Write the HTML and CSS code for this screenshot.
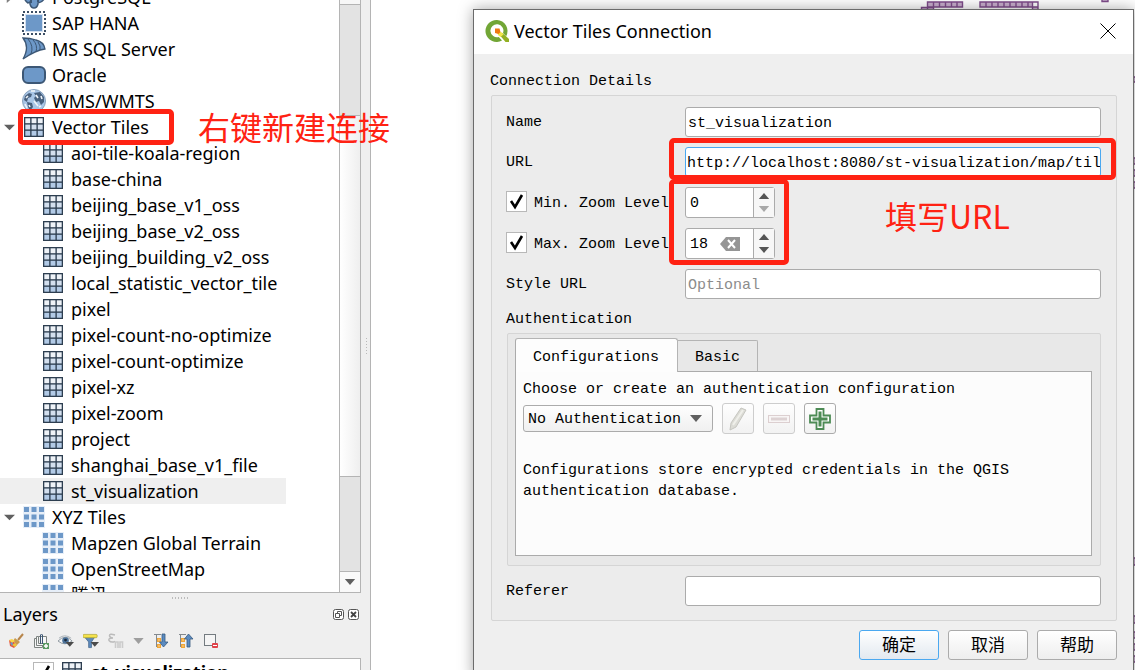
FILE: index.html
```html
<!DOCTYPE html>
<html lang="en">
<head>
<meta charset="utf-8">
<title>Vector Tiles Connection</title>
<link rel="stylesheet" href="styles.css">
</head>
<body>
<svg class="defs" width="0" height="0" aria-hidden="true">
  <defs>
    <symbol id="grid" viewBox="0 0 20 20"><rect width="20" height="20" fill="#2d3e50"/><g fill="#eef2f7"><rect x="1.300" y="1.300" width="4.900" height="4.900"/><rect x="7.550" y="1.300" width="4.900" height="4.900"/><rect x="13.800" y="1.300" width="4.900" height="4.900"/></g><g fill="#d3dfee"><rect x="1.300" y="7.550" width="4.900" height="4.900"/><rect x="7.550" y="7.550" width="4.900" height="4.900"/><rect x="13.800" y="7.550" width="4.900" height="4.900"/></g><g fill="#b2cae6"><rect x="1.300" y="13.800" width="4.900" height="4.900"/><rect x="7.550" y="13.800" width="4.900" height="4.900"/><rect x="13.800" y="13.800" width="4.900" height="4.900"/></g></symbol>
    <symbol id="xyz" viewBox="0 0 22 22"><rect width="22" height="22" fill="#e6eef8"/><path fill="#6d98c8" d="M1 1h5v5H1zM8.500 1h5v5h-5zM16 1h5v5h-5zM1 8.500h5v5H1zM8.500 8.500h5v5h-5zM16 8.500h5v5h-5zM1 16h5v5H1zM8.500 16h5v5h-5zM16 16h5v5h-5z"/></symbol>
    <symbol id="down" viewBox="0 0 12 7"><path d="M0 0h12L6 7z" fill="currentColor"/></symbol>
    <symbol id="up" viewBox="0 0 12 7"><path d="M0 7h12L6 0z" fill="currentColor"/></symbol>
  </defs>
</svg>
<div class="app">
  <aside class="side">
    <section class="browser">
      <ul class="tree">
        <li class="row"><svg class="tw" viewBox="0 0 12 12"><path d="M3 0v12l7-6z" fill="#808080"/></svg><svg class="ic" viewBox="0 0 24 24"><path d="M1 4Q1 1 6 1h13q5 1 4 10-1 6-7 7v1q-1 4-4 4-3 0-4-4v-2l-2 1Q1 15 1 4z" fill="#6d98c8" stroke="#3c5775" stroke-width="1.500"/><path d="M9 18v-5M16 17v-4" stroke="#3c5775" stroke-width="2"/></svg>PostgreSQL</li>
        <li class="row"><svg class="ic" viewBox="0 0 24 24"><rect x="1" y="1" width="22" height="22" fill="none" stroke="#3c4f66" stroke-width="2" stroke-dasharray="2 2"/><rect x="3" y="3" width="18" height="18" fill="#d4e1f1"/><rect x="4" y="4" width="16" height="16" fill="#6d98c8"/></svg>SAP HANA</li>
        <li class="row"><svg class="ic" viewBox="0 0 24 24"><path d="M1 1q7 0 13 2 8 2 9 9-9 1-22 10Q8 10 1 1z" fill="#6d98c8" stroke="#3c5775" stroke-width="1.300"/><path d="M6 2q6 7 3 15M11 3q5 5 3 12M16 5q3 4 2 8" fill="none" stroke="#3c5775"/></svg>MS SQL Server</li>
        <li class="row"><svg class="ic" viewBox="0 0 24 24"><rect x="1" y="4" width="22" height="16" rx="5" fill="#6d98c8" stroke="#3c5775" stroke-width="2"/></svg>Oracle</li>
        <li class="row"><svg class="ic" viewBox="0 0 24 24"><circle cx="12" cy="12" r="11.500" fill="#a8c5e6" stroke="#8ba3bd"/><path d="M3 7l4-3 3 1-1 3-3 1-1 4-3-2zM5 13l5 1 1 4-3 4-2-4zM12 4l6-1 4 5 0 5-3 3-2-4-3 1-2-4 2-2z" fill="#48607d"/><path d="M4 9l2-2M7 16l1 2M14 6l2 3M19 7l1 3M12 12l4 5M3 15l2 4M17 18l2-1M9 2h4" stroke="#eef3f8" stroke-width="1.600"/></svg>WMS/WMTS</li>
        <li class="row"><svg class="tw" viewBox="0 0 12 12"><path d="M0 3h12L6 9z" fill="#606060"/></svg><svg class="ic g"><use href="#grid"/></svg>Vector Tiles<span class="mark mark-tree"></span><span class="note note-tree">右键新建连接</span></li>
        <li class="row child"><svg class="ic g"><use href="#grid"/></svg>aoi-tile-koala-region</li>
        <li class="row child"><svg class="ic g"><use href="#grid"/></svg>base-china</li>
        <li class="row child"><svg class="ic g"><use href="#grid"/></svg>beijing_base_v1_oss</li>
        <li class="row child"><svg class="ic g"><use href="#grid"/></svg>beijing_base_v2_oss</li>
        <li class="row child"><svg class="ic g"><use href="#grid"/></svg>beijing_building_v2_oss</li>
        <li class="row child"><svg class="ic g"><use href="#grid"/></svg>local_statistic_vector_tile</li>
        <li class="row child"><svg class="ic g"><use href="#grid"/></svg>pixel</li>
        <li class="row child"><svg class="ic g"><use href="#grid"/></svg>pixel-count-no-optimize</li>
        <li class="row child"><svg class="ic g"><use href="#grid"/></svg>pixel-count-optimize</li>
        <li class="row child"><svg class="ic g"><use href="#grid"/></svg>pixel-xz</li>
        <li class="row child"><svg class="ic g"><use href="#grid"/></svg>pixel-zoom</li>
        <li class="row child"><svg class="ic g"><use href="#grid"/></svg>project</li>
        <li class="row child"><svg class="ic g"><use href="#grid"/></svg>shanghai_base_v1_file</li>
        <li class="row child selected"><svg class="ic g"><use href="#grid"/></svg>st_visualization</li>
        <li class="row"><svg class="tw" viewBox="0 0 12 12"><path d="M0 3h12L6 9z" fill="#606060"/></svg><svg class="ic x"><use href="#xyz"/></svg>XYZ Tiles</li>
        <li class="row child"><svg class="ic x"><use href="#xyz"/></svg>Mapzen Global Terrain</li>
        <li class="row child"><svg class="ic x"><use href="#xyz"/></svg>OpenStreetMap</li>
        <li class="row child"><svg class="ic x"><use href="#xyz"/></svg>腾讯</li>
      </ul>
      <div class="scroll">
        <div class="sb-up"></div><div class="sb-before"></div><div class="sb-thumb"></div><div class="sb-after"></div>
        <div class="sb-down"><svg width="12" height="6"><use href="#down"/></svg></div>
      </div>
    </section>
    <div class="grip"></div>
    <section class="layers">
      <header class="layers-head">
        <h2 class="layers-title">Layers</h2>
        <button class="tiny" aria-label="Float"><svg viewBox="0 0 11 11"><rect x=".5" y=".5" width="10" height="10" rx="2" fill="#fff" stroke="#555"/><path d="M4.500 5V2.500h4v4H7M2.500 4.500h4v4h-4z" fill="none" stroke="#555"/></svg></button>
        <button class="tiny" aria-label="Close panel"><svg viewBox="0 0 11 11"><rect x=".5" y=".5" width="10" height="10" rx="2" fill="#fff" stroke="#555"/><path d="M3 3l5 5M8 3L3 8" stroke="#444" stroke-width="1.800"/></svg></button>
      </header>
      <div class="tools">
        <button class="tool" aria-label="Style"><svg viewBox="0 0 16 16"><path d="M15 1l-5 6" stroke="#b8864b" stroke-width="2"/><path d="M7 5l5 4-3 3-4-4z" fill="#c99a4e"/><path d="M1 7l4 1 4 4-3 3-4-2z" fill="#e8563c"/><path d="M1 7l3-1 3 2-3 2z" fill="#f8d648"/><path d="M4 12l3-2 2 2-2 2z" fill="#e9c93c"/><path d="M2 10l2-1 1 2-1 2z" fill="#6d98c8"/></svg></button>
        <button class="tool" aria-label="Add group"><svg viewBox="0 0 16 16"><path d="M3.500 5.500h-2v9h8v-2M5.500 3.500h-2v9h8v-2M5.500 3.500h8v7h-8z" fill="#f6f6f6" stroke="#7c8380"/><path d="M7.500 11V2q1-2 2 0v9" fill="none" stroke="#3c5775"/><path d="M10 10h6v6h-6z" fill="#5a9a62"/><path d="M13 11v4M11 13h4" stroke="#fff" stroke-width="1.500"/></svg></button>
        <button class="tool" aria-label="Visibility"><svg viewBox="0 0 17 16"><path d="M0 8q8-8 15 0-8 6-15 0z" fill="#f5f6f7" stroke="#8b959d"/><path d="M1 5q6-5 13 0" fill="none" stroke="#a7afb5"/><circle cx="8" cy="7.500" r="3.500" fill="#4c7299"/><circle cx="8" cy="7" r="1.500" fill="#19293b"/><path d="M8 9h9l-4.500 5z" fill="#4b4b4b"/></svg></button>
        <button class="tool" aria-label="Filter"><svg viewBox="0 0 17 16"><path d="M1 3h12L9 9v6H6V9z" fill="#5d8abc" stroke="#45698f" stroke-width=".8"/><rect y="1" width="15" height="3.500" rx="1" fill="#f4e24c" stroke="#aa9f2e" stroke-width=".7"/><path d="M8 9h9l-4.500 5z" fill="#4b4b4b"/></svg></button>
        <button class="tool" aria-label="Filter by expression"><svg viewBox="0 0 16 16"><path d="M7 2Q1 0 1.500 3 2 5 5 5 0 5 1 7.500 3 10 7 8.500" fill="none" stroke="#bbb" stroke-width="1.400"/><path d="M7.500 15V9H10v6M12 15V9h2.500v6" fill="none" stroke="#cbcbcb" stroke-width="1.600"/></svg></button>
        <svg class="caret" width="11" height="6"><use href="#down"/></svg>
        <button class="tool" aria-label="Expand all"><svg viewBox="0 0 16 16"><path d="M1 1.500h7M3.500 2v12M3 7.500h3M3 13.500h5" fill="none" stroke="#83898e"/><path d="M4 5h4v4H4zM4 11h4v4H4z" fill="#f0a637"/><path d="M5.500 6.500h1v1h-1zM5.500 12.500h1v1h-1z" fill="#fff"/><path d="M9 1h3v8h3l-4.500 5L6.500 9H9z" fill="#5b8bc0" stroke="#395b80" stroke-width=".8"/></svg></button>
        <button class="tool" aria-label="Collapse all"><svg viewBox="0 0 16 16"><path d="M1 1.500h7M2.500 2v12M2 7.500h3M2 13.500h5" fill="none" stroke="#83898e"/><path d="M3 5h4v4H3zM3 11h4v4H3z" fill="#f0a637"/><path d="M4.500 6.500h1v1h-1zM4.500 12.500h1v1h-1z" fill="#fff"/><path d="M9 14h3V6h3L10.500 1 6.500 6H9z" fill="#5b8bc0" stroke="#395b80" stroke-width=".8"/></svg></button>
        <button class="tool" aria-label="Remove layer"><svg viewBox="0 0 16 16"><rect x="1.500" y="1.500" width="11" height="11" fill="#f5f5f5" stroke="#747b80"/><rect x="9" y="10" width="6" height="5" rx="1" fill="#e0424a"/><path d="M10 12.500h4" stroke="#fff"/></svg></button>
      </div>
      <div class="layer-list">
        <label class="layer"><input class="check" type="checkbox" checked><svg class="ic g"><use href="#grid"/></svg>st_visualization</label>
      </div>
    </section>
  </aside>
  <div class="splitter"></div>
  <main class="map">
    <svg class="features" width="220" height="670" viewBox="0 0 220 670" aria-hidden="true">
      <g fill="#c9afce" stroke="#7f4c8b" stroke-width="1.400">
        <path d="M12.500 2h35v5h-35zM18.500 2v5M24.500 2v5M30.500 2v5M36.500 2v5M42 2v5M6.500 7.500h12V12h-12zM12.500 7v4"/>
        <path d="M65 2h58v5H65zM71 2v5M77 2v5M83 2v5M89 2v5M95 2v5M101 2v5M107 2v5M113 2v5M117.500 2v9h5.500V2"/>
        <path d="M187-3h6v4.500h-6z"/>
        <path d="M218 77h6v5h-6zM218 158h6v6h-6v6h6v6h-6v6h6v6h-6zM218 558h6v7h-6zM218 616h6v7h-6zM218 632h6v6h-6v6h6v6h-6v6h6v6h-6z"/>
      </g>
    </svg>
    <div class="dialog" role="dialog" aria-labelledby="dlg-title">
      <header class="titlebar">
        <svg class="logo" viewBox="0 0 24 24"><path d="M12 1a11 11 0 1 0 5 20.500l-3.200-3.600A6.500 6.500 0 1 1 18 14l3.200 3.200A11 11 0 0 0 12 1z" fill="#72a636"/><path d="M13 14h4.500L24 20v3h-3.500z" fill="#93b023"/><path d="M12 12l5 1.500 1.500 2-3 2.500-2.500-2z" fill="#f0e64a"/><path d="M10 9.500h4.500l1 3.500-2 2-3.500-1z" fill="#ee7913"/></svg>
        <h1 class="title" id="dlg-title">Vector Tiles Connection</h1>
        <button class="close" aria-label="Close"><svg viewBox="0 0 16 16"><path d="M.5.5l15 15M15.500.5l-15 15" stroke="#000"/></svg></button>
      </header>
      <form class="body">
        <h2 class="heading">Connection Details</h2>
        <div class="group">
          <div class="field"><label for="name">Name</label><input class="text" id="name" value="st_visualization"></div>
          <div class="field"><label for="url">URL</label><div class="url-wrap"><input class="text focus" id="url" value="http://localhost:8080/st-visualization/map/tiles"><span class="mark mark-url"></span></div></div>
          <div class="field zoom"><label class="opt"><input class="check" type="checkbox" checked>Min. Zoom Level</label>
            <div class="spin"><input class="num" value="0" aria-label="Min. Zoom Level"><div class="steps"><button type="button" aria-label="Increase minimum"><svg width="12" height="6"><use href="#up"/></svg></button><button class="off" type="button" aria-label="Decrease minimum"><svg width="12" height="6"><use href="#down"/></svg></button></div><span class="mark mark-zoom"></span></div>
            <span class="note note-url">填写URL</span>
          </div>
          <div class="field zoom"><label class="opt"><input class="check" type="checkbox" checked>Max. Zoom Level</label>
            <div class="spin"><input class="num short" value="18" aria-label="Max. Zoom Level"><button class="clear" type="button" aria-label="Clear"><svg viewBox="0 0 20 14"><path d="M6 0h14v14H6L0 7z" fill="#959595"/><path d="M8 3l7 8M15 3l-7 8" stroke="#fff" stroke-width="2"/></svg></button><div class="steps"><button type="button" aria-label="Increase maximum"><svg width="12" height="6"><use href="#up"/></svg></button><button type="button" aria-label="Decrease maximum"><svg width="12" height="6"><use href="#down"/></svg></button></div></div>
          </div>
          <div class="field"><label for="style">Style URL</label><input class="text" id="style" placeholder="Optional"></div>
          <section class="auth">
            <h3 class="subheading">Authentication</h3>
            <div class="auth-box">
              <div class="tabs" role="tablist"><button class="tab active" type="button" role="tab" aria-selected="true">Configurations</button><button class="tab" type="button" role="tab" aria-selected="false">Basic</button></div>
              <div class="pane" role="tabpanel">
                <label for="cfg">Choose or create an authentication configuration</label>
                <div class="pick">
                  <div class="combo"><select id="cfg"><option>No Authentication</option></select><svg width="12" height="7"><use href="#down"/></svg></div>
                  <button class="sq off" type="button" aria-label="Edit"><svg viewBox="0 0 24 24"><path d="M15 1l5 2L10 20l-6 3 1-7z" fill="#dcdcd6" stroke="#c6c6c0"/><path d="M17 3L7 18" stroke="#efefea" stroke-width="2"/></svg></button>
                  <button class="sq off" type="button" aria-label="Remove"><svg viewBox="0 0 24 24"><rect x="1.500" y="8.500" width="21" height="7" fill="#f8f5f5" stroke="#dccfd0"/><path d="M4 12h16" stroke="#ddd2d3" stroke-width="3"/></svg></button>
                  <button class="sq" type="button" aria-label="Add"><svg viewBox="0 0 24 24"><path d="M8.500 2h7v6.500H22v7h-6.500V22h-7v-6.500H2v-7h6.500z" fill="#fff" stroke="#4d8b55" stroke-width="1.800"/><path d="M12 4.500v15M4.500 12h15" stroke="#4d8b55" stroke-width="3"/></svg></button>
                </div>
                <p class="info">Configurations store encrypted credentials in the QGIS authentication database.</p>
              </div>
            </div>
          </section>
          <div class="field"><label for="ref">Referer</label><input class="text" id="ref"></div>
        </div>
        <div class="actions"><button class="btn primary" type="button">确定</button><button class="btn" type="button">取消</button><button class="btn" type="button">帮助</button></div>
      </form>
    </div>
  </main>
</div>
</body>
</html>
```
FILE: styles.css
```css
* { box-sizing: border-box; }
body { margin: 0; font: 18px/26px "Noto Sans", "Noto Sans CJK SC", sans-serif; color: #000; background: #fff; }
button { margin: 0; padding: 0; border: 0; background: none; color: inherit; font: inherit; }
input, select { margin: 0; font: inherit; color: inherit; }
h1, h2, h3, p, ul { margin: 0; padding: 0; font-size: inherit; font-weight: normal; }
svg { display: block; flex: none; }
.defs { position: absolute; }
.app { display: flex; height: 100vh; overflow: hidden; }

/* Browser tree */
.side { position: relative; z-index: 1; flex: none; width: 361px; display: flex; flex-direction: column; background: #efefef; }
.browser { flex: 1; min-height: 0; display: flex; background: #fff; border-bottom: 1px solid #b4b4b4; }
.tree { position: relative; z-index: 1; flex: 1; min-width: 0; height: 100%; list-style: none; clip-path: inset(0 -60px 0 0); }
.tree .row:first-child { margin-top: -16px; }
.row { position: relative; display: flex; align-items: center; height: 26px; padding-left: 22px; white-space: nowrap; }
.row.child { padding-left: 41px; }
.row.selected { width: 286px; background: #efefef; }
.tw { position: absolute; left: 4px; width: 11px; height: 11px; }
.ic { width: 24px; height: 24px; margin-right: 6px; }
.ic.g { width: 20px; height: 20px; margin: 0 8px 0 2px; }
.ic.x { width: 22px; height: 22px; margin: 0 7px 0 1px; }

.scroll { flex: none; width: 22px; display: flex; flex-direction: column; border: solid #b4b4b4; border-width: 0 1px; background: #e3e3e3; }
.sb-up { height: 5px; background: #f7f7f7; border-bottom: 1px solid #b4b4b4; }
.sb-before { flex: 110; }
.sb-thumb { flex: 362; border: solid #b4b4b4; border-width: 1px 0; background: linear-gradient(90deg, #fff, #efefef); }
.sb-after { flex: 94; }
.sb-down { height: 21px; display: grid; place-items: center; border-top: 1px solid #b4b4b4; background: #f9f9f9; color: #606060; }

.grip { flex: none; width: 18px; height: 2px; margin: 4px auto 2px; background: repeating-linear-gradient(90deg, #bbb 0 1px, transparent 1px 3px); }

/* Layers panel */
.layers-head { display: flex; align-items: center; gap: 4px; height: 26px; padding: 0 2px 0 3px; }
.layers-title { flex: 1; }
.tiny svg { width: 11px; height: 11px; }
.tools { display: flex; align-items: center; gap: 9px; height: 31px; padding: 0 8px 3px; }
.tool svg { width: 16px; height: 16px; }
.caret { color: #9e9e9e; }
.layer-list { height: 12px; overflow: hidden; border: solid #b4b4b4; border-width: 1px 1px 0 0; background: #fff; }
.layer { display: flex; align-items: center; height: 26px; padding: 0 0 0 33px; font-weight: bold; }
.layer .ic { margin: 0 9px 0 8px; }
.splitter { flex: none; width: 10px; border-right: 1px solid #b4b4b4; background: repeating-linear-gradient(#b9b9b9 0 1px, transparent 1px 3px) 5px 338px / 1px 17px no-repeat #efefef; }

/* Map and dialog */
.map { position: relative; flex: 1; min-width: 0; overflow: hidden; background: #fff; }
.features { position: absolute; top: 0; right: 0; }
.dialog { position: absolute; top: 9px; right: 1px; bottom: -9px; left: 102px; border: 1px solid #6b6b6b; background: #efefef; box-shadow: 0 0 14px rgba(0, 0, 0, .35); font: 15px/19px "Liberation Mono", "Noto Sans CJK SC", monospace; }
.titlebar { display: flex; align-items: center; gap: 5px; height: 44px; padding: 0 17px 2px 11px; background: #fff; font: 18px/26px "Noto Sans", "Noto Sans CJK SC", sans-serif; }
.logo { width: 24px; height: 24px; }
.title { flex: 1; }
.close svg { width: 16px; height: 16px; }
.body { padding: 18px 16px 0; }
.heading { line-height: 19px; margin-bottom: 4px; }
.group { display: flex; flex-direction: column; gap: 10px; margin-left: 1px; padding: 11px 15px 14px 14px; border: 1px solid #d5d5d5; border-radius: 2px; background: #ececec; }
.field { display: grid; grid-template-columns: 179px 1fr; align-items: center; }
.field label { padding-top: 1px; }
.text { width: 100%; height: 30px; padding: 2px 0 0 2px; border: 1px solid #ababab; border-radius: 3px; background: #fff; outline: 0; }
.text.focus { padding-left: 1px; border-color: #4aa8f0; }
.text::placeholder { color: #8c8c8c; opacity: 1; }
.url-wrap { position: relative; }
.zoom { position: relative; }
.opt { display: flex; align-items: center; gap: 7px; white-space: nowrap; }
.check { flex: none; appearance: none; width: 21px; height: 21px; border: 1px solid #b8b8b8; background: #fff; }
.opt .check { margin-bottom: 3px; }
.check:checked { background: #fff url('data:image/svg+xml,<svg xmlns="http://www.w3.org/2000/svg" viewBox="0 0 19 19"><path d="M4 9l4 6 7-12" fill="none" stroke="black" stroke-width="2.600"/></svg>') center / 19px 19px; }
.spin { position: relative; display: flex; align-items: center; width: 90px; height: 31px; border: 1px solid #ababab; border-radius: 3px; background: #fff; }
.num { flex: 1; min-width: 0; height: 29px; padding: 2px 0 0 4px; border: 0; background: none; outline: 0; }
.clear { margin-right: 13px; }
.clear svg { width: 20px; height: 14px; }
.steps { flex: none; width: 21px; height: 29px; display: flex; flex-direction: column; align-items: center; justify-content: center; gap: 7px; border-left: 1px solid #ababab; background: #f7f7f7; color: #555; }
.steps .off { color: #a8a8a8; }

.subheading { padding-top: 1px; margin-bottom: 4px; }
.auth-box { margin-left: 1px; padding: 4px 8px 9px 7px; border: 1px solid #d5d5d5; border-radius: 2px; background: #e8e8e8; }
.tabs { display: flex; align-items: flex-end; }
.tab { height: 31px; padding: 3px 17px 0; border: 1px solid #b4b4b4; border-left: 0; border-bottom: 0; border-radius: 0 2px 0 0; background: #e8e8e8; }
.tab.active { position: relative; height: 34px; margin-bottom: -1px; padding: 3px 18px 0 17px; border-left: 1px solid #ababab; border-radius: 3px 3px 0 0; background: #fdfdfd; }
.pane { min-height: 185px; padding: 8px 7px 10px; border: 1px solid #ababab; background: #fcfcfc; }
.pane label { display: block; }
.pick { display: flex; align-items: center; gap: 9px; margin-top: 4px; }
.combo { position: relative; width: 190px; height: 27px; }
.combo select { appearance: none; width: 100%; height: 100%; padding: 1px 24px 0 4px; border: 1px solid #ababab; border-radius: 3px; background: linear-gradient(#fefefe, #f0f0f0); }
.combo svg { position: absolute; top: 10px; right: 11px; color: #606060; pointer-events: none; }
.sq { display: grid; place-items: center; width: 32px; height: 31px; border: 1px solid #ababab; border-radius: 3px; background: linear-gradient(#fefefe, #f2f2f2); }
.sq.off { border-color: #cdcdcd; }
.sq svg { width: 24px; height: 24px; }
.info { margin-top: 26px; max-width: 520px; line-height: 21px; }
.actions { display: flex; justify-content: flex-end; gap: 9px; padding-top: 9px; }
.btn { width: 80px; height: 30px; padding-bottom: 2px; border: 1px solid #ababab; border-radius: 3px; background: linear-gradient(#fff, #eee); font: 17px/26px "Noto Sans CJK SC", sans-serif; }
.btn.primary { border-color: #4aa8f0; background: linear-gradient(#fff, #e2e9f0); }

/* Red annotations */
.mark { position: absolute; z-index: 2; border: 5px solid #ff2213; border-radius: 5px; pointer-events: none; }
.mark-tree { top: -5px; left: 18px; width: 156px; height: 36px; }
.mark-url { top: -9px; right: -15px; bottom: -3px; left: -16px; }
.mark-zoom { top: -9px; left: -17px; width: 120px; height: 86px; }
.note { position: absolute; z-index: 2; color: #ff2213; font: 32px/40px "Noto Sans CJK SC", sans-serif; white-space: nowrap; }
.note-tree { top: -8px; left: 198px; }
.note-url { top: 8px; left: 379px; }
```
